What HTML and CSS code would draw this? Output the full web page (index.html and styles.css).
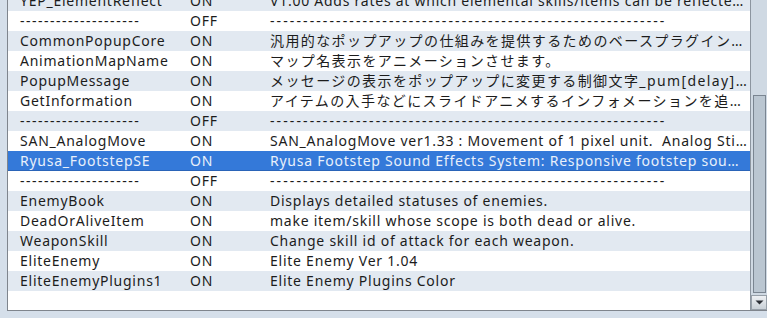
FILE: index.html
```html
<!DOCTYPE html>
<html>
<head>
<meta charset="utf-8">
<link rel="stylesheet" href="styles.css">
</head>
<body>
<div class="panel">
  <div class="list">
    <div class="rows">
      <div class="row alt"><span class="name">YEP_ElementReflect</span><span class="status">ON</span><span class="desc">V1.00 Adds rates at which elemental skills/items can be reflected by actors and enemies.</span></div>
      <div class="row"><span class="name dash">--------------------</span><span class="status">OFF</span><span class="desc dash">------------------------------------------------------------</span></div>
      <div class="row alt"><span class="name">CommonPopupCore</span><span class="status">ON</span><span class="desc jp">汎用的なポップアップの仕組みを提供するためのベースプラグインです。</span></div>
      <div class="row"><span class="name">AnimationMapName</span><span class="status">ON</span><span class="desc jp">マップ名表示をアニメーションさせます。</span></div>
      <div class="row alt"><span class="name">PopupMessage</span><span class="status">ON</span><span class="desc jp">メッセージの表示をポップアップに変更する制御文字_pum[delay]を追加します。</span></div>
      <div class="row"><span class="name">GetInformation</span><span class="status">ON</span><span class="desc jp">アイテムの入手などにスライドアニメするインフォメーションを追加します。</span></div>
      <div class="row alt"><span class="name dash">--------------------</span><span class="status">OFF</span><span class="desc dash">------------------------------------------------------------</span></div>
      <div class="row"><span class="name">SAN_AnalogMove</span><span class="status">ON</span><span class="desc">SAN_AnalogMove ver1.33 : Movement of 1 pixel unit.&nbsp; Analog Stick support and more.</span></div>
      <div class="row selected"><span class="name">Ryusa_FootstepSE</span><span class="status">ON</span><span class="desc">Ryusa Footstep Sound Effects System: Responsive footstep sounds for the player.</span></div>
      <div class="row"><span class="name dash">--------------------</span><span class="status">OFF</span><span class="desc dash">------------------------------------------------------------</span></div>
      <div class="row alt"><span class="name">EnemyBook</span><span class="status">ON</span><span class="desc">Displays detailed statuses of enemies.</span></div>
      <div class="row"><span class="name">DeadOrAliveItem</span><span class="status">ON</span><span class="desc">make item/skill whose scope is both dead or alive.</span></div>
      <div class="row alt"><span class="name">WeaponSkill</span><span class="status">ON</span><span class="desc">Change skill id of attack for each weapon.</span></div>
      <div class="row"><span class="name">EliteEnemy</span><span class="status">ON</span><span class="desc">Elite Enemy Ver 1.04</span></div>
      <div class="row alt"><span class="name">EliteEnemyPlugins1</span><span class="status">ON</span><span class="desc">Elite Enemy Plugins Color</span></div>
    </div>
  </div>
  <div class="scrollbar">
    <div class="thumb"></div>
    <div class="btn-down">
      <svg width="9" height="5" viewBox="0 0 9 5"><path d="M0.5 0.5 H8.5 L4.5 4.5 Z" fill="#2b2f36"/></svg>
    </div>
  </div>
</div>
</body>
</html>
```
FILE: styles.css
```css
html, body {
  margin: 0;
  padding: 0;
  background: #d5dfea;
}
body {
  font-family: "Noto Sans", "Noto Sans CJK JP", sans-serif;
  font-size: 14px;
  letter-spacing: 0.75px;
  color: #1c1c1c;
}
.panel {
  display: flex;
  margin-left: 7px;
  height: 310px;
  border-left: 1px solid #7f858d;
  border-bottom: 1px solid #7f858d;
  background: #ffffff;
}
.list {
  flex: 1;
  overflow: hidden;
  min-width: 0;
}
.rows {
  margin-top: -9px;
}
.row {
  display: grid;
  grid-template-columns: 170px 80px 1fr;
  height: 20px;
  line-height: 20px;
  background: #ffffff;
}
.row.alt {
  background: #e2e9f1;
}
.row.selected {
  background: #3479d9;
  color: #e8f0fb;
  box-shadow: inset 0 -1px 0 #2a64b8;
}
.row span {
  white-space: nowrap;
  overflow: hidden;
  padding-left: 12px;
}
.desc {
  text-overflow: ellipsis;
  padding-right: 2px;
}
.name.dash {
  letter-spacing: 1.5px;
}
.desc.dash {
  letter-spacing: 2.1px;
}
.desc.jp {
  letter-spacing: 1.4px;
}
.scrollbar {
  width: 16px;
  border-left: 1px solid #8c959f;
  background: #cfd9e3;
  display: flex;
  flex-direction: column;
  align-items: center;
}
.thumb {
  margin-top: 95px;
  width: 11px;
  height: 197px;
  border: 1px solid #7a8591;
  background: #bac6d1;
}
.btn-down {
  margin-top: 2px;
  width: 14px;
  height: 13px;
  border: 1px solid #97a0a9;
  background: linear-gradient(#eef1f4, #c9d0d7);
  display: flex;
  align-items: center;
  justify-content: center;
}
```
